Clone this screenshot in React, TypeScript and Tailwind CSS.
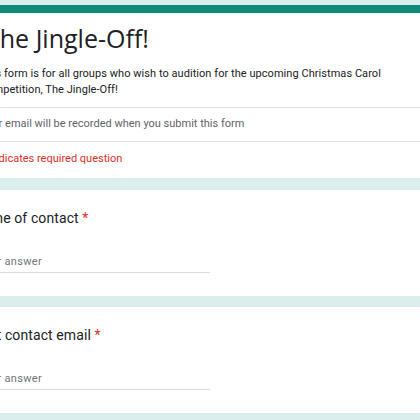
import React from 'react';

const QuestionCard: React.FC<{ label: string }> = ({ label }) => (
  <div className="bg-white h-[106px] pt-[18px]">
    <div className="-ml-[27px] text-[14px] leading-[20px] text-[#202124] tracking-[0.1px]">
      {label} <span className="text-[#d93025]">*</span>
    </div>
    <div className="-ml-[22px] mt-[20px] w-[232px] border-b border-[#dadce0]">
      <span className="text-[11px] leading-[20px] text-[#70757a] tracking-[0.3px]">Your answer</span>
    </div>
  </div>
);

export default function App() {
  return (
    <div
      className="w-[420px] h-[420px] overflow-hidden bg-[#d9eeed]"
      style={{ fontFamily: 'Roboto, "Liberation Sans", sans-serif' }}
    >
      <div className="pt-[5px]">
        {/* Header card */}
        <div className="h-[8px] bg-[#0c8b7b]" />
        <div className="bg-white h-[165px]">
          <h1
            className="-ml-[14px] pt-[9px] text-[25px] leading-[32px] text-[#202124]"
            style={{ fontFamily: '"Open Sans", sans-serif' }}
          >
            The Jingle-Off!
          </h1>
          <p className="-ml-[20px] mt-[12px] pr-[20px] text-[11px] leading-[16px] text-[#202124] tracking-[0.05px]">
            This form is for all groups who wish to audition for the upcoming Christmas Carol Competition, The Jingle-Off!
          </p>
          <div className="mt-[9px] border-t border-[#e0e0e0]" />
          <div className="h-[33px] flex items-center -ml-[20px] text-[11px] text-[#5f6368]">
            Your email will be recorded when you submit this form
          </div>
          <div className="border-t border-[#e0e0e0]" />
          <div className="pt-[9px] -ml-[18px] text-[11px] leading-[16px] text-[#d93025]">
            * Indicates required question
          </div>
        </div>
        <div className="h-[12px]" />
        <QuestionCard label="Name of contact" />
        <div className="h-[11px]" />
        <QuestionCard label="Best contact email" />
      </div>
    </div>
  );
}
